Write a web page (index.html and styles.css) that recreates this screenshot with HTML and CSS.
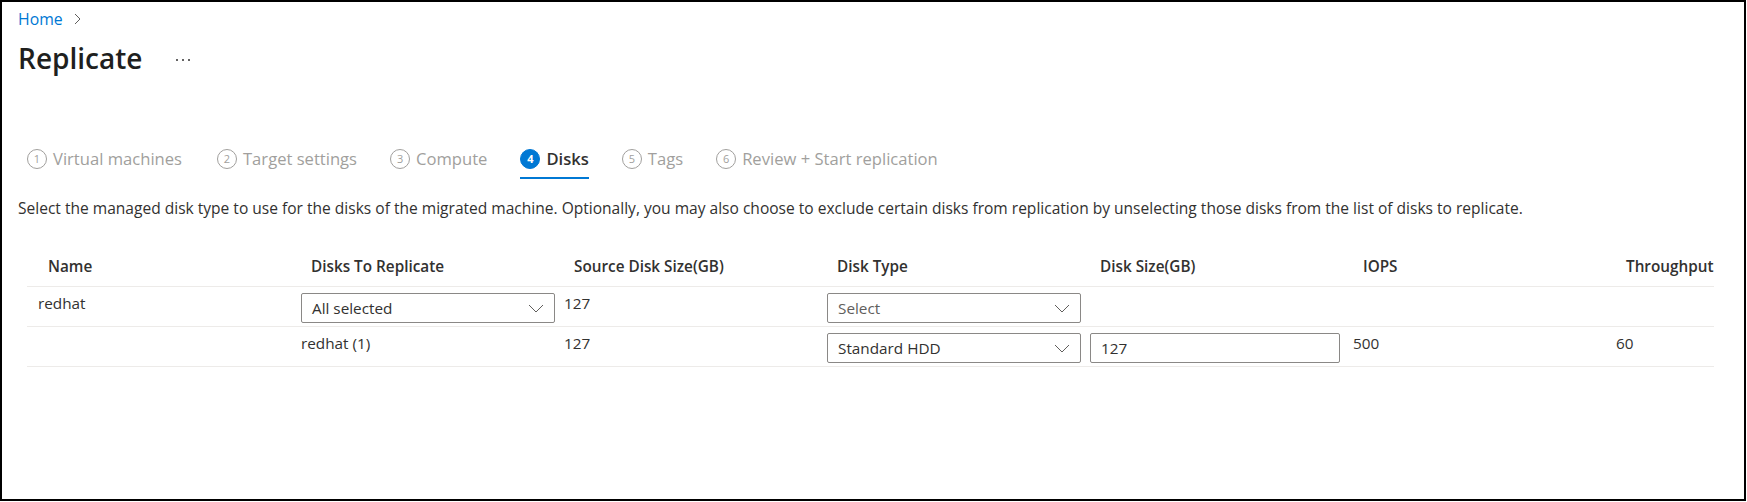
FILE: index.html
```html
<!DOCTYPE html>
<html lang="en">
<head>
<meta charset="utf-8">
<title>Replicate</title>
<link rel="stylesheet" href="styles.css">
</head>
<body>
<div class="frame">
  <nav class="breadcrumb">
    <a class="crumb" href="#">Home</a>
    <svg class="crumb-chevron" width="7" height="12" viewBox="0 0 7 12"><path d="M1 1 L6 6 L1 11" fill="none" stroke="#605e5c" stroke-width="1"/></svg>
  </nav>
  <div class="title-row">
    <h1 class="title">Replicate</h1>
    <svg class="more" width="16" height="4" viewBox="0 0 16 4"><circle cx="2" cy="2" r="1" fill="#323130"/><circle cx="8" cy="2" r="1" fill="#323130"/><circle cx="14" cy="2" r="1" fill="#323130"/></svg>
  </div>
  <div class="tabs">
    <div class="tab"><span class="num">1</span><span class="label">Virtual machines</span></div>
    <div class="tab"><span class="num">2</span><span class="label">Target settings</span></div>
    <div class="tab"><span class="num">3</span><span class="label">Compute</span></div>
    <div class="tab active"><span class="num">4</span><span class="label">Disks</span></div>
    <div class="tab"><span class="num">5</span><span class="label">Tags</span></div>
    <div class="tab"><span class="num">6</span><span class="label">Review + Start replication</span></div>
  </div>
  <p class="desc">Select the managed disk type to use for the disks of the migrated machine. Optionally, you may also choose to exclude certain disks from replication by unselecting those disks from the list of disks to replicate.</p>
  <div class="grid">
    <div class="th">Name</div>
    <div class="th">Disks To Replicate</div>
    <div class="th">Source Disk Size(GB)</div>
    <div class="th">Disk Type</div>
    <div class="th">Disk Size(GB)</div>
    <div class="th">IOPS</div>
    <div class="th">Throughput</div>

    <div class="td">redhat</div>
    <div class="td"><div class="dropdown"><span>All selected</span><svg class="chev" width="16" height="9" viewBox="0 0 16 9"><path d="M1 1 L8 8 L15 1" fill="none" stroke="#605e5c" stroke-width="1"/></svg></div></div>
    <div class="td">127</div>
    <div class="td"><div class="dropdown"><span class="placeholder">Select</span><svg class="chev" width="16" height="9" viewBox="0 0 16 9"><path d="M1 1 L8 8 L15 1" fill="none" stroke="#605e5c" stroke-width="1"/></svg></div></div>
    <div class="td"></div>
    <div class="td"></div>
    <div class="td"></div>

    <div class="td"></div>
    <div class="td">redhat (1)</div>
    <div class="td">127</div>
    <div class="td"><div class="dropdown"><span>Standard HDD</span><svg class="chev" width="16" height="9" viewBox="0 0 16 9"><path d="M1 1 L8 8 L15 1" fill="none" stroke="#605e5c" stroke-width="1"/></svg></div></div>
    <div class="td"><div class="textbox">127</div></div>
    <div class="td">500</div>
    <div class="td">60</div>
  </div>
</div>
</body>
</html>
```
FILE: styles.css
```css
* { box-sizing: border-box; }
html, body { margin: 0; padding: 0; background: #fff; }
body {
  font-family: "Open Sans", "Noto Sans", "Liberation Sans", sans-serif;
  color: #323130;
  font-size: 15.3px;
}
.frame {
  width: 1746px;
  height: 501px;
  border: 2px solid #000;
  padding: 7px 16px 0 16px;
  overflow: hidden;
}
.breadcrumb {
  display: flex;
  align-items: center;
  height: 20px;
  line-height: 20px;
}
.crumb {
  color: #0078d4;
  text-decoration: none;
  font-size: 15.8px;
}
.crumb-chevron { margin-left: 11px; }
.title-row {
  display: flex;
  align-items: center;
  margin-top: 11px;
  height: 36px;
}
.title {
  margin: 0;
  font-size: 28px;
  line-height: 36px;
  font-weight: 600;
  color: #201f1e;
}
.more { margin-left: 33px; margin-top: 4px; }
.tabs {
  display: flex;
  margin-top: 72px;
  margin-left: 9px;
  gap: 33px;
}
.tab {
  display: flex;
  align-items: center;
  gap: 6px;
  height: 31px;
  padding-bottom: 7px;
  border-bottom: 2px solid transparent;
  color: #a19f9d;
  font-size: 16.6px;
  line-height: 22px;
}
.tab:nth-child(2) { margin-left: 2px; }
.num {
  width: 20px;
  height: 20px;
  border: 1px solid #a19f9d;
  border-radius: 50%;
  font-size: 11px;
  line-height: 18px;
  text-align: center;
}
.tab.active { border-bottom-color: #0078d4; color: #323130; font-weight: 600; }
.tab.active .num {
  background: #0078d4;
  border-color: #0078d4;
  color: #fff;
  font-weight: 700;
}
.desc {
  margin: 19px 0 0 0;
  font-size: 15.55px;
  line-height: 20px;
  color: #323130;
  white-space: nowrap;
}
.grid {
  display: grid;
  grid-template-columns: repeat(6, 263px) 1fr;
  margin: 27px 16px 0 9px;
}
.th {
  padding: 11px 0 10px 21px;
  font-weight: 600;
  font-size: 15.3px;
  line-height: 20px;
  border-bottom: 1px solid #edebe9;
  white-space: nowrap;
}
.td {
  padding: 6px 0 3px 11px;
  height: 40px;
  font-size: 15.3px;
  line-height: 20px;
  border-bottom: 1px solid #edebe9;
  white-space: nowrap;
}
.dropdown {
  width: 254px;
  height: 30px;
  border: 1px solid #8a8886;
  border-radius: 2px;
  display: flex;
  align-items: center;
  justify-content: space-between;
  padding: 0 10px 0 10px;
  color: #323130;
  background: #fff;
}
.dropdown .placeholder { color: #605e5c; }
.textbox {
  width: 250px;
  height: 30px;
  border: 1px solid #8a8886;
  border-radius: 2px;
  padding: 0 10px;
  line-height: 28px;
  color: #323130;
}
```
